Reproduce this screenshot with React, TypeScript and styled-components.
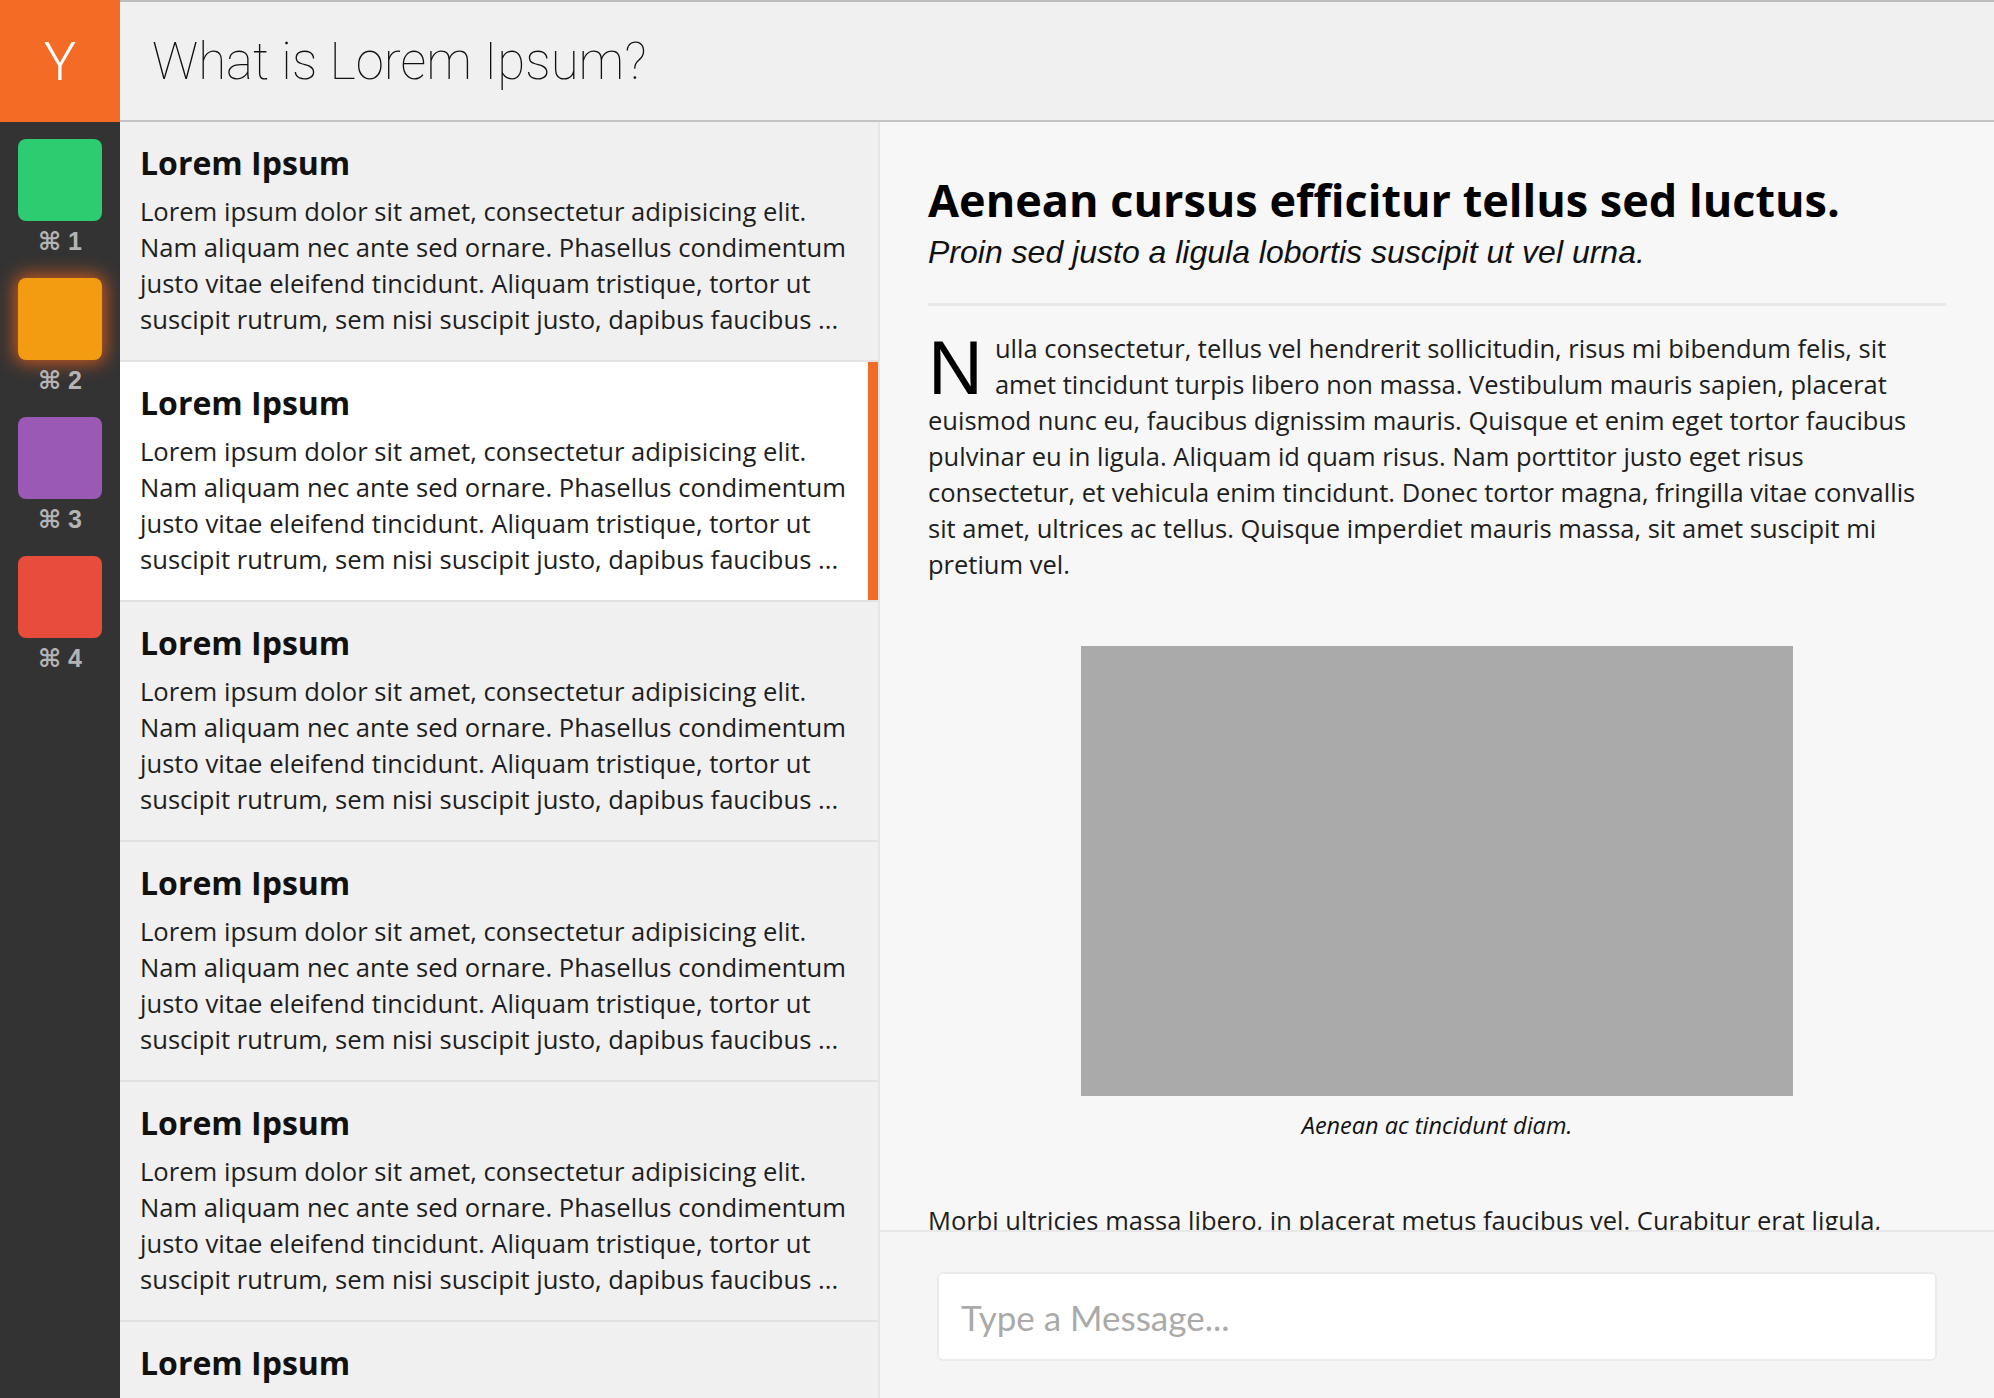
import styled, { createGlobalStyle } from "styled-components";

const GlobalStyle = createGlobalStyle`
  html, body {
    margin: 0;
    height: 100%;
    overflow: hidden;
  }
  body {
    font-family: "Open Sans", "Liberation Sans", sans-serif;
    color: #222;
  }
  * {
    box-sizing: border-box;
  }
`;

const ACCENT = "#f36b25";

const shortcuts = [
  { key: 1, color: "#2ecc71", glow: false },
  { key: 2, color: "#f39c12", glow: true },
  { key: 3, color: "#9b59b6", glow: false },
  { key: 4, color: "#e74c3c", glow: false },
];

const teaser =
  "Lorem ipsum dolor sit amet, consectetur adipisicing elit. Nam aliquam nec ante sed ornare. Phasellus condimentum justo vitae eleifend tincidunt. Aliquam tristique, tortor ut suscipit rutrum, sem nisi suscipit justo, dapibus faucibus ...";

const threads = [0, 1, 2, 3, 4, 5, 6];

function App() {
  return (
    <>
      <GlobalStyle />
      <Shell>
        <Logo>Y</Logo>
        <TopBar>
          <Title>What is Lorem Ipsum?</Title>
        </TopBar>

        <Dock>
          {shortcuts.map((s) => (
            <Shortcut key={s.key}>
              <Tile $color={s.color} $glow={s.glow} />
              <KeyHint>⌘ {s.key}</KeyHint>
            </Shortcut>
          ))}
        </Dock>

        <List>
          {threads.map((i) => (
            <Item key={i} $active={i === 1}>
              <ItemTitle>Lorem Ipsum</ItemTitle>
              <ItemText>{teaser}</ItemText>
            </Item>
          ))}
        </List>

        <Reader>
          <Article>
            <ArticleHead>
              <Heading>Aenean cursus efficitur tellus sed luctus.</Heading>
              <Sub>Proin sed justo a ligula lobortis suscipit ut vel urna.</Sub>
            </ArticleHead>
            <Para>
              <DropCap>N</DropCap>
              ulla consectetur, tellus vel hendrerit sollicitudin, risus mi
              bibendum felis, sit amet tincidunt turpis libero non massa.
              Vestibulum mauris sapien, placerat euismod nunc eu, faucibus
              dignissim mauris. Quisque et enim eget tortor faucibus pulvinar eu
              in ligula. Aliquam id quam risus. Nam porttitor justo eget risus
              consectetur, et vehicula enim tincidunt. Donec tortor magna,
              fringilla vitae convallis sit amet, ultrices ac tellus. Quisque
              imperdiet mauris massa, sit amet suscipit mi pretium vel.
            </Para>
            <Figure>
              <Placeholder />
              <Caption>Aenean ac tincidunt diam.</Caption>
            </Figure>
            <Para>
              Morbi ultricies massa libero, in placerat metus faucibus vel.
              Curabitur erat ligula, tincidunt a gravida vitae, pulvinar non
              nibh. Sed sodales lacus at nisl posuere, sit amet aliquam lorem
              vulputate.
            </Para>
          </Article>
          <Composer>
            <MessageInput placeholder="Type a Message..." />
          </Composer>
        </Reader>
      </Shell>
    </>
  );
}

export default App;

const Shell = styled.div`
  display: grid;
  grid-template-columns: 120px 760px 1fr;
  grid-template-rows: 122px 1fr;
  height: 100vh;
  overflow: hidden;
`;

const Logo = styled.div`
  display: flex;
  align-items: center;
  justify-content: center;
  background: ${ACCENT};
  color: #fff;
  font-family: Roboto, "Liberation Sans", sans-serif;
  font-weight: 300;
  font-size: 54px;
`;

const TopBar = styled.header`
  grid-column: 2 / 4;
  display: flex;
  align-items: center;
  padding-left: 32px;
  background: #f0f0f0;
  border-top: 2px solid #bdbdbd;
  border-bottom: 2px solid #c4c4c4;
`;

const Title = styled.h1`
  margin: 0;
  font-family: Roboto, "Liberation Sans", sans-serif;
  font-weight: 100;
  font-size: 51px;
  color: #111;
`;

const Dock = styled.nav`
  display: flex;
  flex-direction: column;
  align-items: center;
  gap: 25px;
  padding-top: 17px;
  background: #333;
`;

const Shortcut = styled.div`
  display: flex;
  flex-direction: column;
  align-items: center;
`;

const Tile = styled.div<{ $color: string; $glow: boolean }>`
  width: 84px;
  height: 82px;
  border-radius: 8px;
  background: ${(p) => p.$color};
  box-shadow: ${(p) => (p.$glow ? "0 0 18px 3px rgba(232, 96, 28, 0.85)" : "none")};
`;

const KeyHint = styled.span`
  margin-top: 8px;
  font-family: "Liberation Sans", "DejaVu Sans", sans-serif;
  font-weight: 700;
  font-size: 25px;
  line-height: 24px;
  color: #b4b4b4;
`;

const List = styled.section`
  background: #f0f0f0;
  border-right: 2px solid #e5e5e5;
  overflow: hidden;
`;

const Item = styled.article<{ $active: boolean }>`
  padding: 22px 20px;
  border-bottom: 2px solid #e2e2e2;
  background: ${(p) => (p.$active ? "#fff" : "transparent")};
  box-shadow: ${(p) => (p.$active ? `inset -10px 0 0 ${ACCENT}` : "none")};
`;

const ItemTitle = styled.h2`
  margin: 0 0 12px;
  font-size: 32px;
  line-height: 38px;
  font-weight: 700;
  color: #111;
`;

const ItemText = styled.p`
  margin: 0;
  font-size: 25.6px;
  line-height: 36px;
  color: #1e1e1e;
`;

const Reader = styled.main`
  display: flex;
  flex-direction: column;
  min-height: 0;
  background: #f7f7f7;
  overflow: hidden;
`;

const Article = styled.div`
  flex: 1;
  min-height: 0;
  overflow: hidden;
  padding: 50px 48px 0;
`;

const ArticleHead = styled.div`
  padding-bottom: 33px;
  border-bottom: 3px solid #e9e9e9;
`;

const Heading = styled.h1`
  margin: 0;
  font-size: 45px;
  line-height: 55px;
  font-weight: 700;
  color: #000;
`;

const Sub = styled.p`
  margin: 7px 0 0;
  font-family: "Liberation Sans", Arial, sans-serif;
  font-style: italic;
  font-size: 32px;
  line-height: 36px;
  color: #111;
`;

const Para = styled.p`
  margin: 24px 0 0;
  font-size: 25.5px;
  line-height: 36px;
  color: #1e1e1e;
`;

const DropCap = styled.span`
  float: left;
  margin: 6px 12px 0 0;
  font-family: "Liberation Sans", Arial, sans-serif;
  font-size: 76px;
  line-height: 64px;
  color: #000;
`;

const Figure = styled.figure`
  margin: 64px 0 60px;
  text-align: center;
`;

const Placeholder = styled.div`
  width: 70%;
  height: 450px;
  margin: 0 auto;
  background: #aaa;
`;

const Caption = styled.figcaption`
  margin-top: 13px;
  font-style: italic;
  font-size: 23.5px;
  line-height: 33px;
  color: #111;
`;

const Composer = styled.div`
  flex: none;
  height: 168px;
  padding: 40px 57px 0;
  background: #f5f5f5;
  border-top: 2px solid #e8e8e8;
`;

const MessageInput = styled.input`
  display: block;
  width: 100%;
  height: 89px;
  padding: 0 22px;
  border: 2px solid #ebebeb;
  border-radius: 6px;
  background: #fff;
  font-family: Lato, "Open Sans", sans-serif;
  font-size: 35px;
  color: #333;
  outline: none;
  &::placeholder {
    color: #aaa;
  }
`;
